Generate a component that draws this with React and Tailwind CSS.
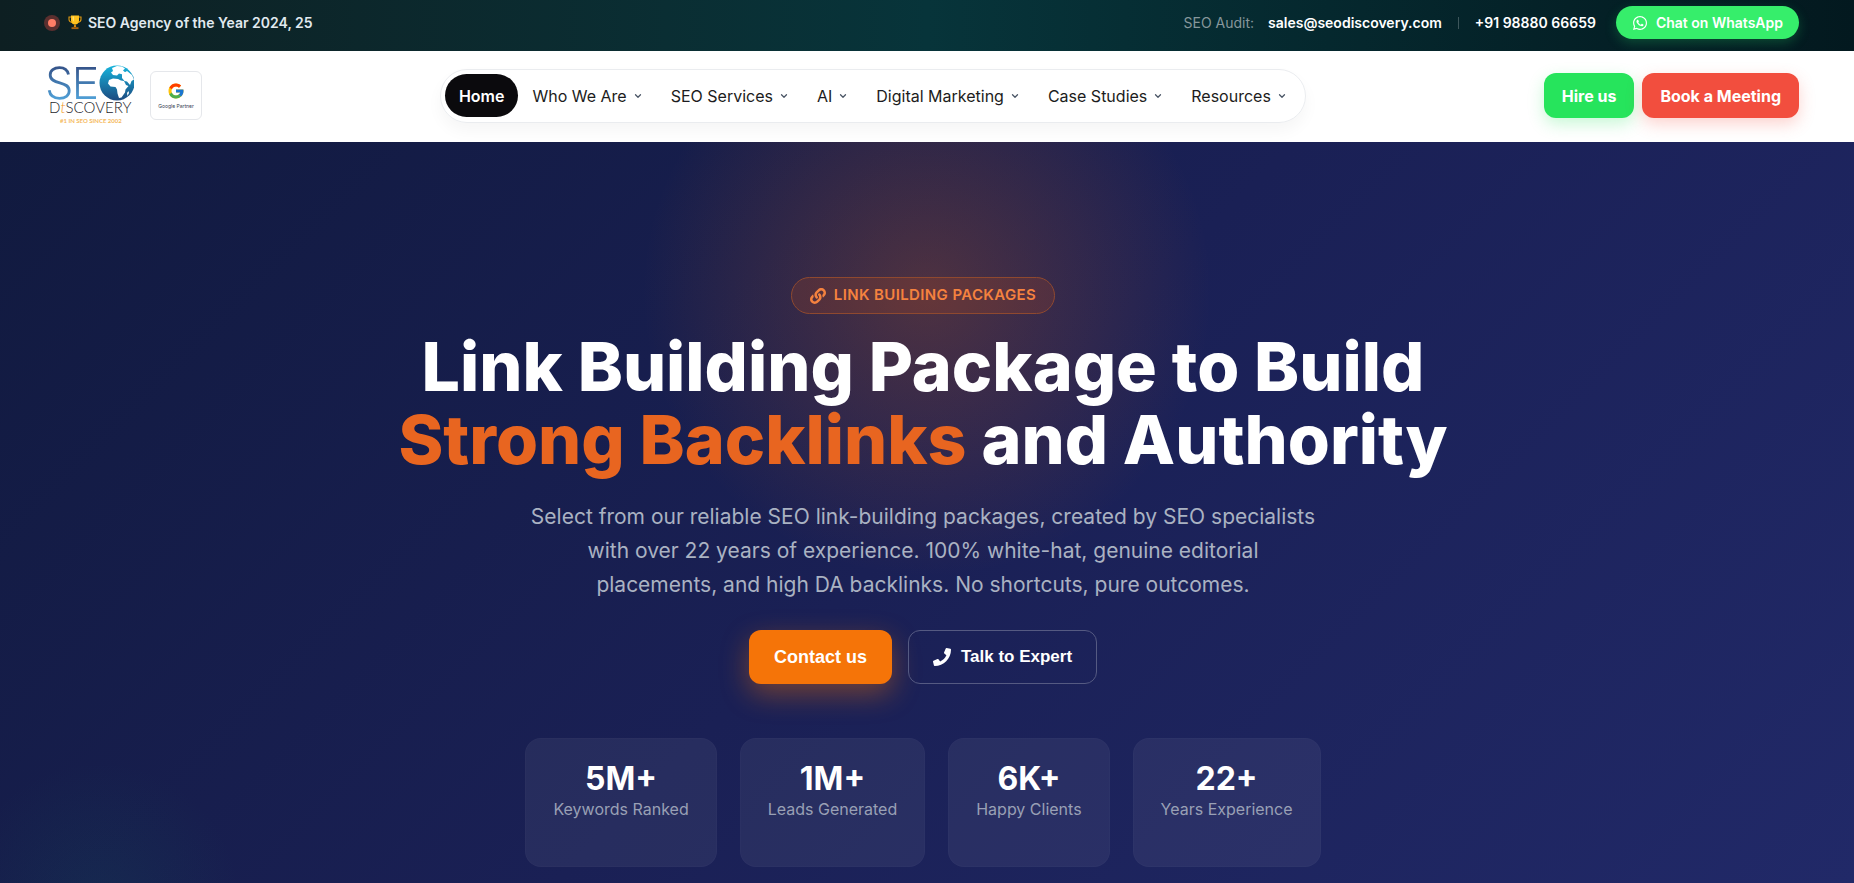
import { FaLink, FaPhone, FaWhatsapp } from 'react-icons/fa';
import { FcGoogle } from 'react-icons/fc';
import { ChevronDown } from 'lucide-react';

const NAV_ITEMS = ['Who We Are', 'SEO Services', 'AI', 'Digital Marketing', 'Case Studies', 'Resources'];

const STATS = [
  { value: '5M+', label: 'Keywords Ranked' },
  { value: '1M+', label: 'Leads Generated' },
  { value: '6K+', label: 'Happy Clients' },
  { value: '22+', label: 'Years Experience' },
];

function Trophy() {
  return (
    <svg viewBox="0 0 14 15" className="h-[15px] w-3.5" aria-hidden="true">
      <path d="M3 2H1v2.200C1 6 2.300 7.200 4.200 7.400M11 2h2v2.200C13 6 11.700 7.200 9.800 7.400" fill="none" stroke="#e09a12" strokeWidth="1.100" />
      <path d="M3 .5h8v4.700C11 8 9.300 9.600 7 9.600S3 8 3 5.200z" fill="#ffc31f" />
      <path d="M6.200 9.400h1.600l.4 2.600H5.800z" fill="#d98c10" />
      <path d="M3.500 12.200h7v1.900h-7z" fill="#a9630f" />
      <path d="M4.600 1.500h1.300v5.200c-.9-.8-1.300-2-1.300-3.200z" fill="#ffe07a" />
    </svg>
  );
}

function Logo() {
  return (
    <svg viewBox="0 0 88 62" className="h-[62px] w-[88px]" role="img" aria-label="SEO Discovery">
      <defs>
        <linearGradient id="seo" x1="0" y1="2" x2="0" y2="34" gradientUnits="userSpaceOnUse">
          <stop offset="0" stopColor="#35548a" />
          <stop offset="1" stopColor="#4f9fd6" />
        </linearGradient>
        <linearGradient id="globe" x1="0" y1="0" x2="0" y2="1">
          <stop offset="0" stopColor="#16b4dc" />
          <stop offset="1" stopColor="#1c4a80" />
        </linearGradient>
      </defs>
      {/* S and E strokes */}
      <path
        d="M22.500 9.500C21.500 5 18 2.700 13.500 2.700 8 2.700 4.200 5.600 4.200 10c0 5 4.500 6.500 9.600 7.800 5.200 1.400 9.400 3 9.400 8 0 4.700-4 7.500-9.700 7.500-5.700 0-9.500-3-10.300-8"
        fill="none" stroke="url(#seo)" strokeWidth="2.800"
      />
      <path d="M50 3.300H31.500v29.400H50M31.500 17.600h17.300" fill="none" stroke="url(#seo)" strokeWidth="2.800" />
      {/* Globe */}
      <circle cx="71" cy="18" r="17.500" fill="url(#globe)" />
      <path d="M66 3l5-2 5 .5 3 2-2 2 3 2.500-3 1.500-4-1-2 2-4-.5-2-2.500 2-1.500z" fill="#fff" />
      <path d="M76 9l5-3 5 4 2 4.500-2.500 1.500-1.500 4-3-3.500-2.500-.5-2.500-3z" fill="#fff" />
      <path d="M63 15l4-1.500 5 .5 3 1.500 3 .5 2 4 2.500 1-3 3.500-.5 3-3.500 5-2.500.5-1.500-4.500-.5-4-1.500-2.500-5-.5-2.500-3z" fill="#fff" />
      <path d="M81 28l1.500-2 .5 2-1.500 3z" fill="#fff" />
      <text x="3" y="48" fontSize="15" fontFamily="Lato, sans-serif" fontWeight="300" fill="#26262b">
        D<tspan fill="#f29a1f" fontStyle="italic">t</tspan>SCOVERY
      </text>
      <text x="14" y="58" fontSize="6" fontFamily="Lato, sans-serif" fontWeight="700" fill="#f5b95c">#1 IN SEO SINCE 2002</text>
    </svg>
  );
}

function TopBar() {
  return (
    <div className="flex h-[51px] items-center justify-between bg-linear-to-r from-[#0d1f22] via-[#07343a] to-[#03191f] pb-1.5 pl-11 pr-[55px] text-sm font-semibold text-white">
      <div className="flex items-center gap-1.5">
        <span className="flex size-4 items-center justify-center rounded-full bg-[#5a2f2f]">
          <span className="size-2 rounded-full bg-[#ff7d66]" />
        </span>
        <span className="ml-0.5"><Trophy /></span>
        <p className="text-[#e1eaf0]">SEO Agency of the Year 2024, 25</p>
      </div>
      <div className="flex items-center">
        <span className="mr-3.5 font-normal text-[#87979b]">SEO Audit:</span>
        <a href="mailto:sales@seodiscovery.com">sales@seodiscovery.com</a>
        <span className="mx-4 h-3 w-px bg-[#3d565b]" />
        <a href="tel:+919888066659">+91 98880 66659</a>
        <a
          href="#whatsapp"
          className="ml-5 flex h-[33px] items-center gap-2 rounded-full bg-[#36ee6b] px-4 shadow-[0_4px_12px_rgba(37,211,102,0.25)]"
        >
          <FaWhatsapp className="size-4" />
          Chat on WhatsApp
        </a>
      </div>
    </div>
  );
}

function Header() {
  return (
    <header className="flex h-[91px] items-center justify-between bg-white pb-0.5 pl-[46px] pr-[55px]">
      <div className="flex items-center gap-4">
        <a href="#home"><Logo /></a>
        <div className="flex h-[49px] w-[52px] flex-col items-center justify-center gap-1 rounded-md border border-gray-200">
          <FcGoogle className="size-[18px]" />
          <span className="text-[5px] leading-none text-gray-700">Google Partner</span>
        </div>
      </div>

      <nav className="flex h-[54px] items-center rounded-full border border-gray-200/80 px-1 text-base text-[#1c1c20] shadow-[0_8px_16px_rgba(0,0,0,0.04)]">
        <a href="#home" className="flex h-[43px] items-center rounded-full bg-[#0b0a0d] px-3.5 font-semibold text-white">Home</a>
        {NAV_ITEMS.map((item) => (
          <a key={item} href="#menu" className="flex items-center gap-1.5 px-3.5">
            {item}
            <ChevronDown className="size-2.5 text-gray-600" strokeWidth={3} />
          </a>
        ))}
      </nav>

      <div className="flex gap-2 text-base font-bold text-white">
        <button className="h-[45px] rounded-xl bg-[#26e45c] px-[18px] shadow-[0_6px_16px_rgba(37,228,92,0.25)]">Hire us</button>
        <button className="h-[45px] rounded-xl bg-[#f24e3e] px-[18px] shadow-[0_6px_16px_rgba(242,78,62,0.25)]">Book a Meeting</button>
      </div>
    </header>
  );
}

function Hero() {
  return (
    <main className="flex flex-1 flex-col items-center bg-[radial-gradient(circle_at_50%_150px,rgba(240,105,15,0.25),transparent_285px),radial-gradient(circle_at_100px_760px,rgba(16,120,100,0.12),transparent_140px),linear-gradient(135deg,#111a3f_0%,#1a2055_50%,#212968_100%)] pb-4 pr-2 pt-[135px] text-center text-white">
      <div className="flex h-[37px] items-center gap-2 rounded-full border border-[#8f492f] bg-[#ea580c]/15 px-[18px] text-[15px] font-semibold tracking-wide text-[#f5823f]">
        <FaLink className="size-4" />
        LINK BUILDING PACKAGES
      </div>

      <h1 className="mt-4 text-[68px] font-extrabold leading-[73px]">
        Link Building Package to Build
        <br />
        <span className="text-[#e86520]">Strong Backlinks</span> and Authority
      </h1>

      <p className="mt-6 max-w-[790px] text-[21px] leading-[34px] text-[#aab2c2]">
        Select from our reliable SEO link-building packages, created by SEO specialists
        with over 22 years of experience. 100% white-hat, genuine editorial
        placements, and high DA backlinks. No shortcuts, pure outcomes.
      </p>

      <div className="mt-7 flex gap-4 font-['Liberation_Sans',sans-serif] font-bold">
        <button className="h-[54px] rounded-xl bg-[#f57408] px-[25px] text-lg shadow-[0_10px_28px_rgba(245,116,8,0.4)]">
          Contact us
        </button>
        <button className="flex h-[54px] items-center gap-2.5 rounded-xl border border-[#555a82] px-6 text-[17px]">
          <FaPhone className="size-[18px]" />
          Talk to Expert
        </button>
      </div>

      <div className="mt-[54px] flex gap-[23px]">
        {STATS.map(({ value, label }) => (
          <div key={label} className="h-[129px] rounded-2xl border border-white/2 bg-white/6 px-[27px] pt-[22px]">
            <p className="text-[32px] font-bold leading-9">{value}</p>
            <p className="text-base leading-6 text-[#99a0b5]">{label}</p>
          </div>
        ))}
      </div>
    </main>
  );
}

export default function App() {
  return (
    <div className="flex min-h-screen flex-col font-[Inter,sans-serif]">
      <TopBar />
      <Header />
      <Hero />
    </div>
  );
}
